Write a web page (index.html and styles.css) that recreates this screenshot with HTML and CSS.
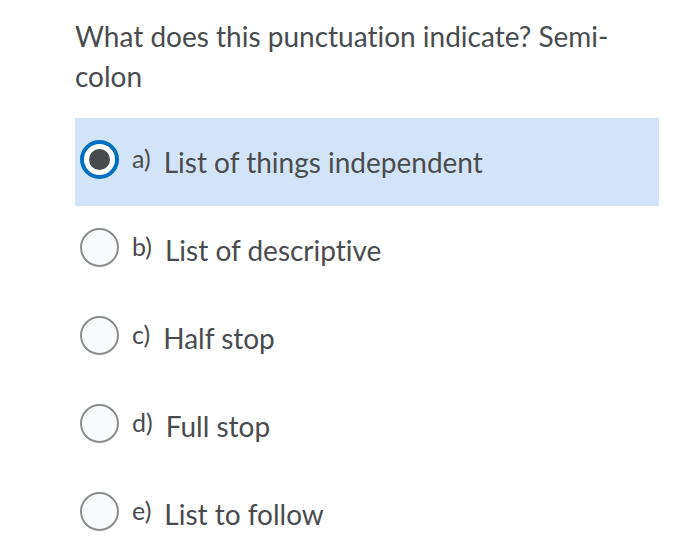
FILE: index.html
```html
<!DOCTYPE html>
<html>
<head>
<meta charset="utf-8">
<link rel="stylesheet" href="styles.css">
</head>
<body>
<div class="quiz">
  <p class="question">What does this punctuation indicate? Semi-colon</p>
  <ul class="options">
    <li class="option selected"><span class="radio"></span><span class="label">a)</span><span class="text">List of things independent</span></li>
    <li class="option"><span class="radio"></span><span class="label">b)</span><span class="text">List of descriptive</span></li>
    <li class="option"><span class="radio"></span><span class="label">c)</span><span class="text">Half stop</span></li>
    <li class="option"><span class="radio"></span><span class="label">d)</span><span class="text">Full stop</span></li>
    <li class="option"><span class="radio"></span><span class="label">e)</span><span class="text">List to follow</span></li>
  </ul>
</div>
</body>
</html>
```
FILE: styles.css
```css
html, body {
  margin: 0;
  padding: 0;
  background: #ffffff;
}
.quiz {
  width: 584px;
  padding: 16px 0 0 75px;
  font-family: Lato, "Open Sans", sans-serif;
  color: #494c4e;
  font-variant-ligatures: none;
}
.question {
  margin: 0 0 22px 0;
  font-size: 28px;
  line-height: 40px;
  max-width: 584px;
}
.options {
  list-style: none;
  margin: 0;
  padding: 0;
}
.option {
  height: 88px;
  display: flex;
  align-items: center;
  padding-left: 5px;
  box-sizing: border-box;
}
.option.selected {
  background: #d2e5f8;
}
.radio {
  width: 39px;
  height: 39px;
  box-sizing: border-box;
  border: 2px solid #8a8d90;
  border-radius: 50%;
  background: #f9fafb;
  margin-right: 13px;
  margin-bottom: 5px;
  flex: none;
  display: flex;
  align-items: center;
  justify-content: center;
}
.selected .radio {
  border: 4px solid #006fbf;
  background: #ffffff;
}
.selected .radio::after {
  content: "";
  width: 21px;
  height: 21px;
  border-radius: 50%;
  background: #494c4e;
}
.label {
  font-size: 25px;
  margin-right: 13px;
  margin-bottom: 8px;
}
.text {
  font-size: 28px;
}
```
